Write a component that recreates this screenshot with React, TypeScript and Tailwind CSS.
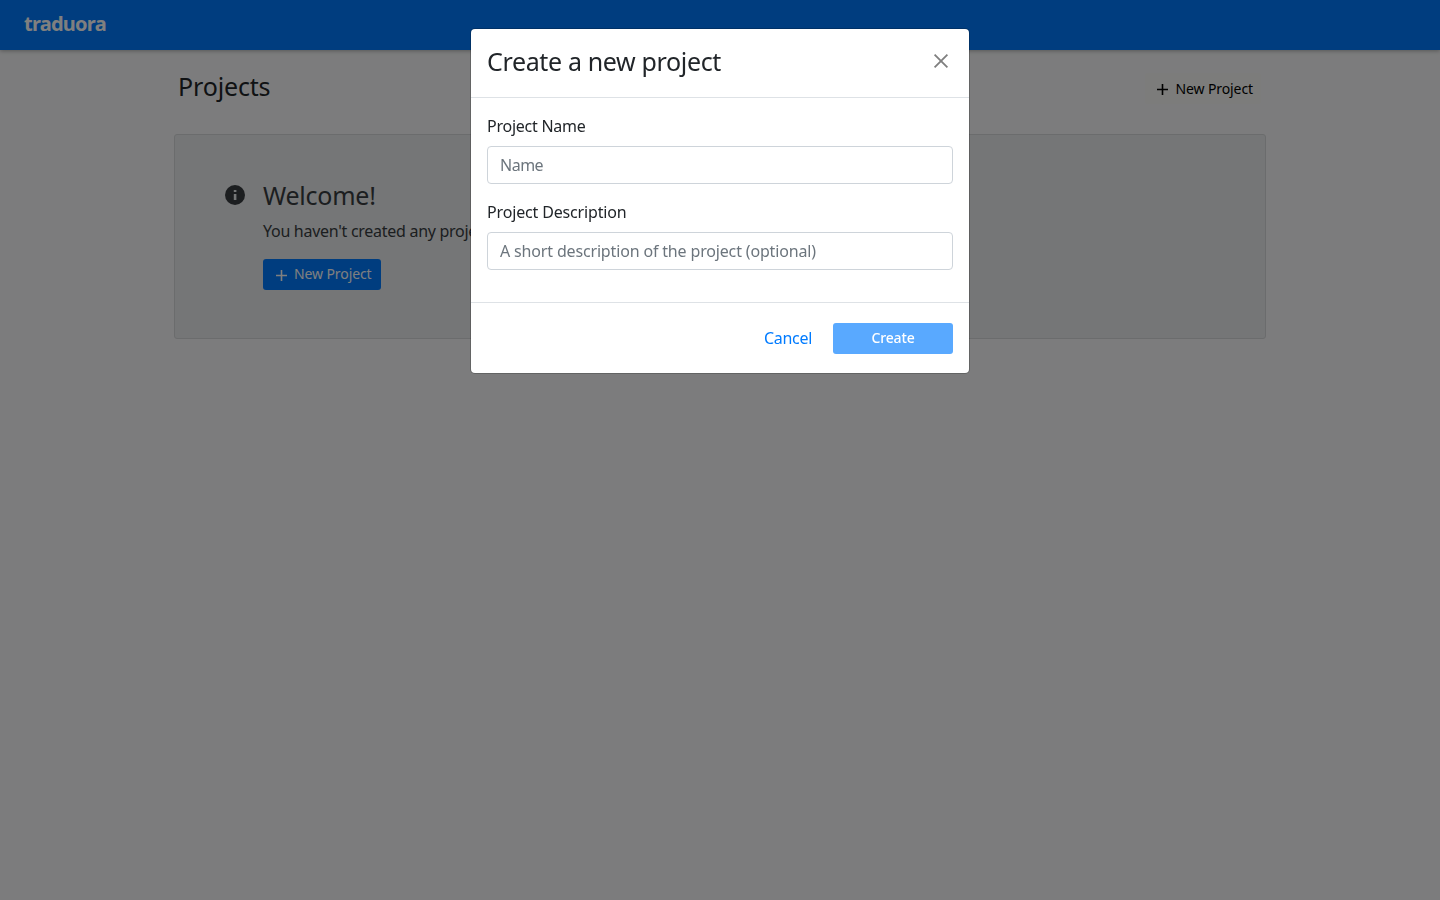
import type { ReactNode } from "react";

function PlusIcon({ className }: { className?: string }) {
  return (
    <svg className={className} viewBox="0 0 12 12" width="12" height="12" fill="none" stroke="currentColor" strokeWidth="1.6">
      <path d="M6.5 1v11M1 6.5h11" />
    </svg>
  );
}

function InfoIcon() {
  return (
    <svg viewBox="0 0 24 24" width="24" height="24">
      <circle cx="12" cy="12" r="10" fill="currentColor" />
      <path d="M10.8 7h2.6v2h-2.6zM10.8 11h2.6v6h-2.6z" fill="#ebecee" />
    </svg>
  );
}

function CloseIcon() {
  return (
    <svg viewBox="0 0 24 24" width="24" height="24" fill="none" stroke="currentColor" strokeWidth="1.8">
      <path d="M5.6 5.6l12.8 12.8M18.4 5.6L5.6 18.4" />
    </svg>
  );
}

function Field({ label, children }: { label: ReactNode; children: ReactNode }) {
  return (
    <label className="mb-4 flex flex-col gap-2">
      <span className="flex h-6 items-center tracking-[-0.16px]">{label}</span>
      {children}
    </label>
  );
}

const inputClass =
  "h-[38px] w-full rounded border border-[#ced4da] bg-white px-3 text-base text-[#495057] outline-none placeholder:text-[#6c757d] placeholder:opacity-100";

export default function App() {
  return (
    <div className="h-screen overflow-hidden bg-[#f8f9fa] font-['Noto_Sans',sans-serif] text-base leading-6 text-[#212529]">
      <header className="relative flex h-[50px] items-center bg-[#007bff] px-6 shadow-[0_1px_4px_rgba(0,0,0,0.3)]">
        <span className="-mt-0.5 text-[20px] font-bold tracking-[-0.75px] text-white">traduora</span>
      </header>

      <main className="mx-auto w-[1092px]">
        <div className="flex h-[84px] items-start justify-between pl-1">
          <h1 className="mt-[21px] text-[25px] leading-[30px] tracking-[-0.15px] text-[#212529]">Projects</h1>
          <button className="mt-[23px] mr-[5px] flex h-[31px] items-center rounded-[3px] bg-[#f8f9f6] px-2 text-[14px] tracking-[-0.1px] text-black">
            <PlusIcon className="mt-px mr-[7px] ml-[3px]" />
            <span className="whitespace-nowrap">New Project</span>
          </button>
        </div>

        <section className="flex h-[205px] rounded-[3px] border border-[#d6d8db] bg-[#ebecee] text-[#383d41]">
          <div className="mt-12 ml-12 h-6">
            <InfoIcon />
          </div>
          <div className="mt-[45px] ml-4">
            <h2 className="text-[25px] leading-[30px] tracking-[-0.25px]">Welcome!</h2>
            <p className="mt-[9px] tracking-[-0.28px] whitespace-nowrap">You haven't created any projects yet.</p>
            <button className="mt-4 flex h-[31px] w-[118px] items-center rounded-[3px] bg-[#007bff] px-3 text-[14px] tracking-[-0.1px] text-white">
              <PlusIcon className="mr-[7px] shrink-0" />
              <span className="-mt-0.5 whitespace-nowrap">New Project</span>
            </button>
          </div>
        </section>
      </main>

      <div className="fixed inset-0 flex items-start justify-center bg-black/50 pt-[29px]">
        <div role="dialog" className="h-[344px] w-[498px] rounded-[4px] bg-white shadow-[0_0_0_1px_rgba(0,0,0,0.2)]">
          <div className="flex h-[69px] items-start justify-between border-b border-[#dee2e6] pr-4 pl-4">
            <h2 className="mt-[17px] text-[25px] leading-[30px] tracking-[-0.35px]">Create a new project</h2>
            <button aria-label="Close" className="mt-5 text-[#7f7f7f]">
              <CloseIcon />
            </button>
          </div>
          <div className="flex h-[204px] flex-col px-4 pt-4">
            <Field label={<span className="tracking-[-0.25px]">Project Name</span>}>
              <input className={`${inputClass} tracking-[-0.5px]`} placeholder="Name" />
            </Field>
            <Field label={<span>Project Description</span>}>
              <input className={`${inputClass} tracking-[-0.16px]`} placeholder="A short description of the project (optional)" />
            </Field>
          </div>
          <div className="flex h-[71px] items-center justify-end border-t border-[#dee2e6] px-4">
            <button className="mr-[21px] tracking-[-0.3px] text-[#007bff]">Cancel</button>
            <button className="h-[31px] w-[120px] rounded-[3px] bg-[#59a9ff] text-[14px] font-medium tracking-[-0.15px] text-white">Create</button>
          </div>
        </div>
      </div>
    </div>
  );
}
